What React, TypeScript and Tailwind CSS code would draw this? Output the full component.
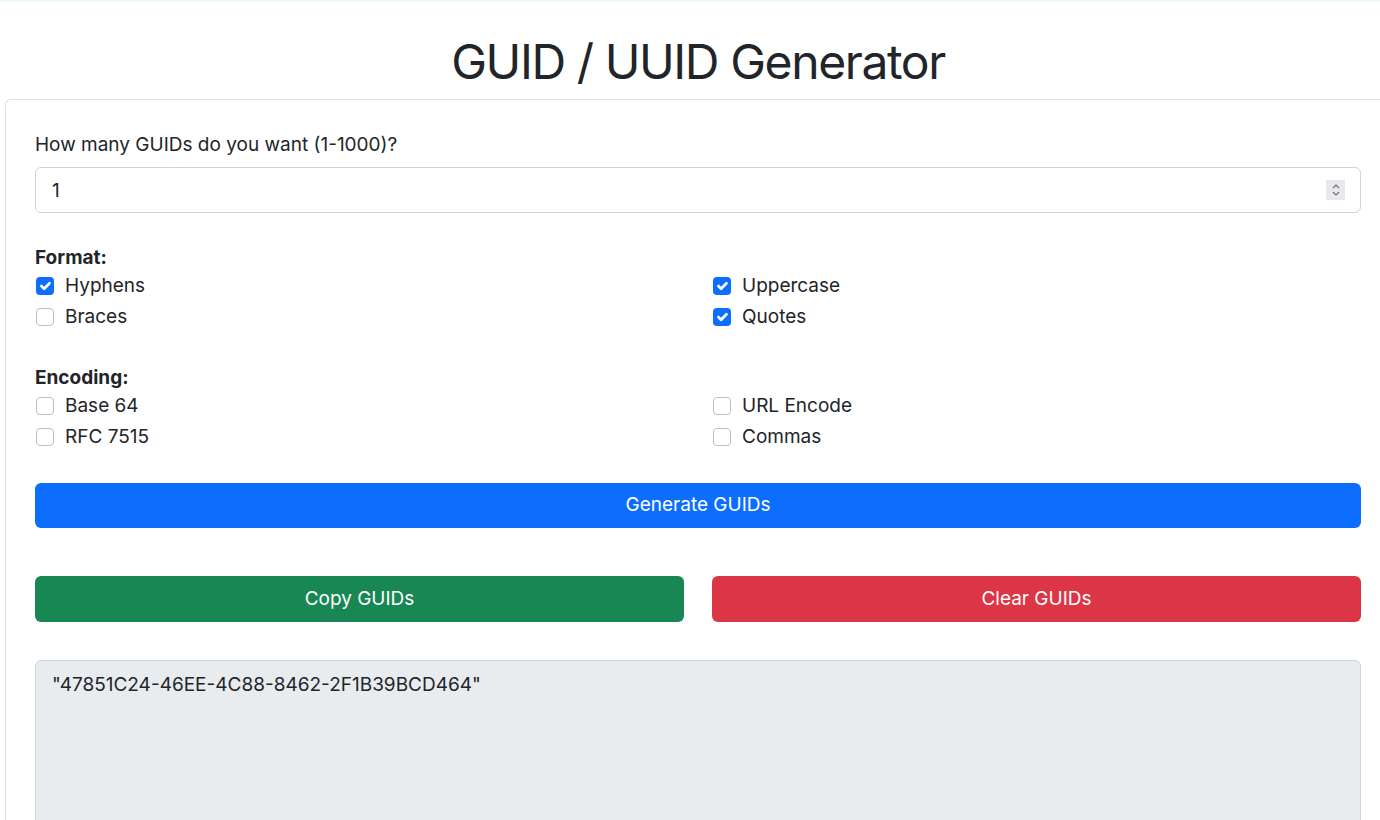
import React from "react";

function Check({ label, checked }: { label: string; checked?: boolean }) {
  return (
    <div className="flex h-[31px] items-center">
      {checked ? (
        <span className="ml-[1px] flex h-[18px] w-[18px] items-center justify-center rounded-[4px] bg-[#0d6efd]">
          <svg viewBox="0 0 20 20" className="h-[18px] w-[18px]">
            <path d="M6 10l3 3l6-6" fill="none" stroke="#fff" strokeWidth="3" strokeLinecap="round" strokeLinejoin="round" />
          </svg>
        </span>
      ) : (
        <span className="ml-[1px] h-[18px] w-[18px] rounded-[4px] border border-[#bfbfbf] bg-white" />
      )}
      <span className="ml-[11px] text-[19px] leading-[24px] text-[#212529]">{label}</span>
    </div>
  );
}

export default function App() {
  return (
    <div className="h-[820px] w-[1380px] overflow-hidden bg-white text-[#212529]" style={{ fontFamily: "Inter, 'Noto Sans', sans-serif" }}>
      <div className="h-[2px] bg-[#eefaf6]" />
      <div className="ml-[5px] w-[1386px]">
        <h1 className="mt-[31px] mb-[8px] text-center text-[48px] font-normal leading-[58px] tracking-[-1.4px]">GUID / UUID Generator</h1>
        <div className="rounded-tl-[6px] border-t border-l border-[#dee2e6] pt-[33px] pl-[29px] pr-[30px]">
          <label className="block text-[19px] leading-[24px] mb-[10px]">How many GUIDs do you want (1-1000)?</label>
          <div className="relative">
            <input
              type="text"
              readOnly
              value="1"
              className="block h-[46px] w-full rounded-[6px] border border-[#ced4da] bg-white px-[16px] text-[19px] text-[#212529] outline-none"
            />
            <div className="absolute right-[16px] top-[13px] flex h-[20px] w-[19px] flex-col items-center justify-center bg-[#e9e9ed]">
              <svg viewBox="0 0 10 14" className="h-[14px] w-[10px]">
                <path d="M2 5l3-3l3 3M2 9l3 3l3-3" fill="none" stroke="#6b6b6b" strokeWidth="1.1" />
              </svg>
            </div>
          </div>

          <div className="mt-[33px] text-[19px] font-bold leading-[24px]">Format:</div>
          <div className="grid grid-cols-2 gap-x-[28px]">
            <div>
              <Check label="Hyphens" checked />
              <Check label="Braces" />
            </div>
            <div>
              <Check label="Uppercase" checked />
              <Check label="Quotes" checked />
            </div>
          </div>

          <div className="mt-[34px] text-[19px] font-bold leading-[24px]">Encoding:</div>
          <div className="grid grid-cols-2 gap-x-[28px]">
            <div>
              <Check label="Base 64" />
              <Check label="RFC 7515" />
            </div>
            <div>
              <Check label="URL Encode" />
              <Check label="Commas" />
            </div>
          </div>

          <button className="mt-[31px] flex h-[45px] w-full items-center justify-center rounded-[6px] bg-[#0d6efd] text-[19px] text-white">
            Generate GUIDs
          </button>

          <div className="mt-[48px] grid grid-cols-2 gap-x-[28px]">
            <button className="flex h-[46px] items-center justify-center rounded-[6px] bg-[#198754] text-[19px] text-white">Copy GUIDs</button>
            <button className="flex h-[46px] items-center justify-center rounded-[6px] bg-[#dc3545] text-[19px] text-white">Clear GUIDs</button>
          </div>

          <div className="mt-[38px] h-[300px] rounded-[6px] border border-[#ced4da] bg-[#e9ecef] px-[16px] pt-[12px] text-[19px] leading-[24px]">
            "47851C24-46EE-4C88-8462-2F1B39BCD464"
          </div>
        </div>
      </div>
    </div>
  );
}
